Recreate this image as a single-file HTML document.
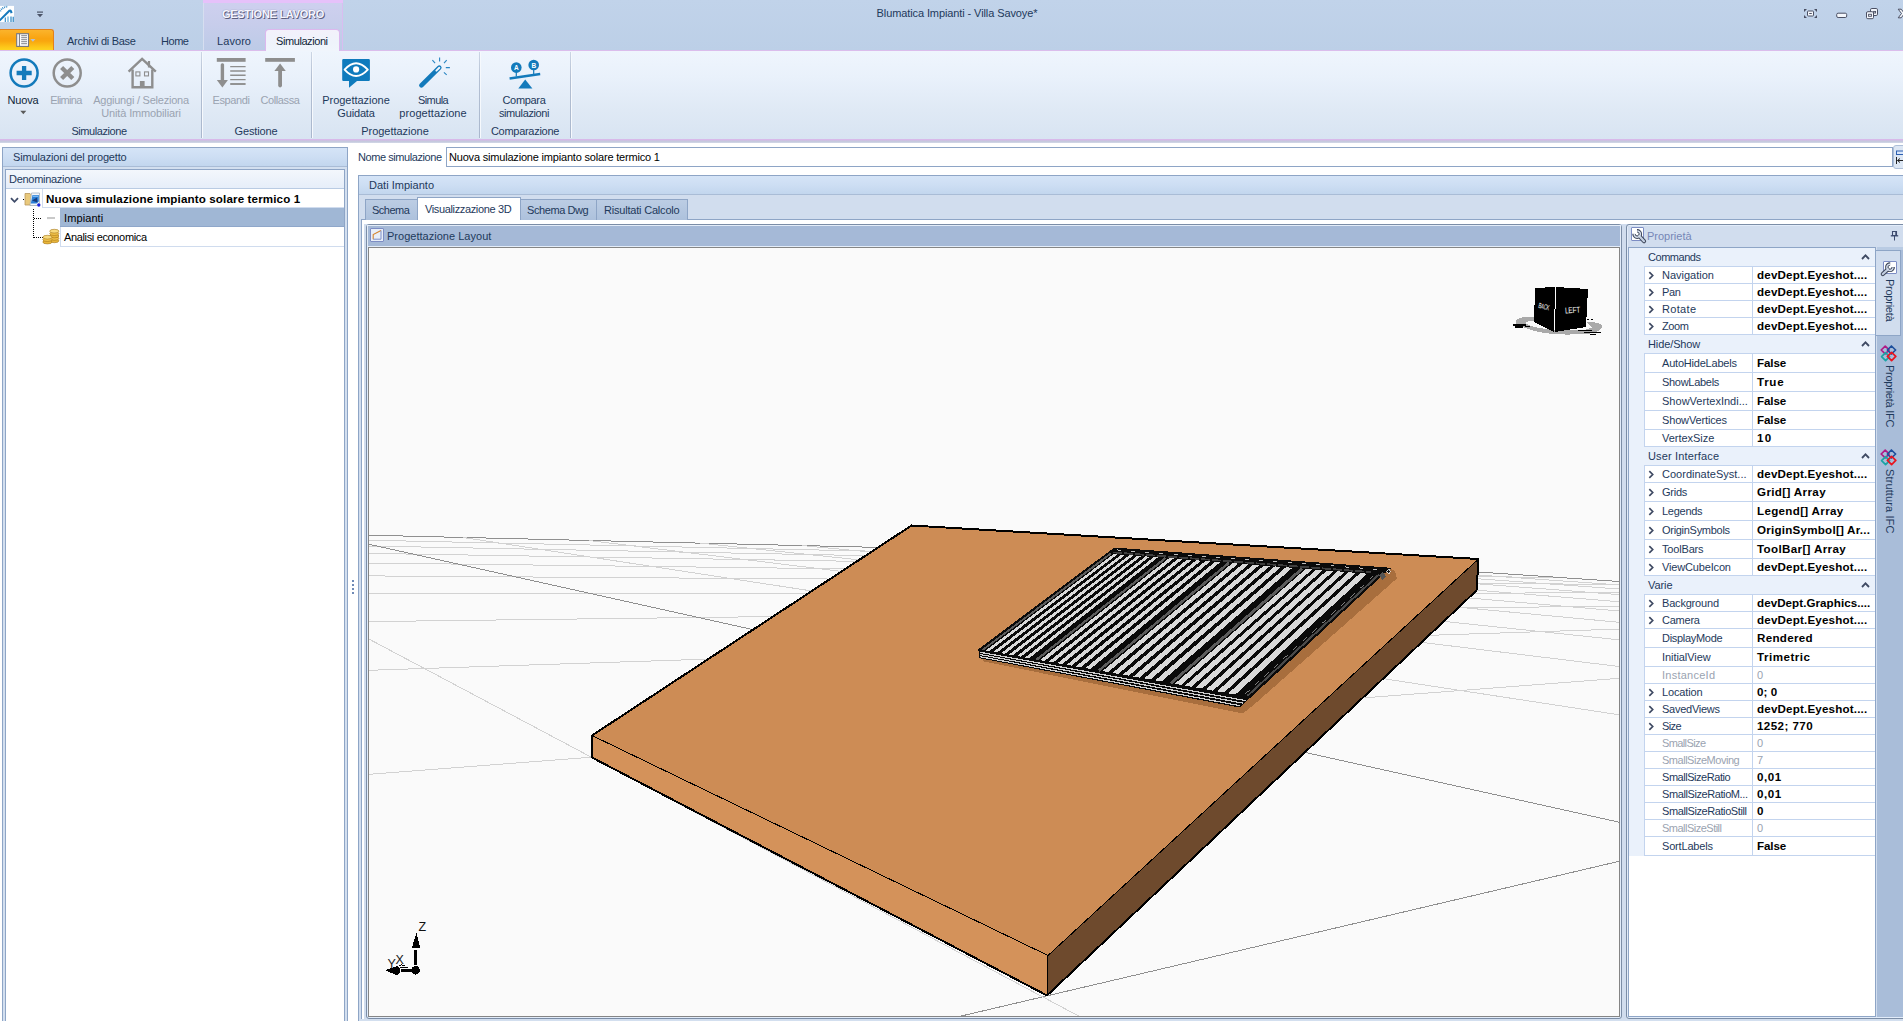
<!DOCTYPE html>
<html>
<head>
<meta charset="utf-8">
<title>Blumatica Impianti - Villa Savoye*</title>
<style>
*{box-sizing:border-box;margin:0;padding:0}
html,body{width:1903px;height:1021px;overflow:hidden;background:#fff}
body{font-family:"Liberation Sans",sans-serif;font-size:11px;color:#1e395b;position:relative;letter-spacing:-0.25px}
.a{position:absolute}
.t{position:absolute;white-space:nowrap;line-height:13px;height:13px}
.c{text-align:center}
.dis{color:#9aa3b1}
.b{font-weight:bold;letter-spacing:0.2px;font-size:11.6px}
/* title + ribbon */
#titlebar{left:0;top:0;width:1903px;height:51px;background:linear-gradient(#c1d3ea,#bccfe7)}
#ribbon{left:0;top:51px;width:1903px;height:88px;background:linear-gradient(#eff5fd 0,#e9f1fb 30%,#dfe9f5 68%,#d8e4f2 100%)}
#ribline{left:0;top:139px;width:1903px;height:4px;background:linear-gradient(#ddb6ed 0,#d3bce6 25%,#c3c6dc 55%,#d3d9e8 100%)}
.gsep{position:absolute;top:52px;width:1px;height:86px;background:linear-gradient(#ccd6e5,#b4c0d3 30%,#a9b7cd)}
.gsep:after{content:"";position:absolute;left:1px;top:0;width:1px;height:86px;background:#f6f9fd}
.tab{border:1px solid #8ea5c6;border-bottom:none;background:linear-gradient(#bccde4,#adc1dc)}
</style>
</head>
<body>
<!-- ===== TITLE BAR ===== -->
<div class="a" id="titlebar"></div>
<div class="a" id="ribbon"></div>
<div class="a" id="ribline"></div>
<!-- app icon -->
<svg class="a" style="left:0;top:5px" width="16" height="18" viewBox="0 0 16 18">
 <rect x="0" y="0.9" width="14" height="16.2" fill="#fff"/>
 <path d="M-0.5 15.6 L9.6 5.6 Q10.6 5.2 11 6.4 L11.6 8.2" stroke="#1679bd" stroke-width="2.1" fill="none" stroke-linejoin="round"/>
 <path d="M0.2 6.2 A8.5 8.5 0 0 1 7.8 1.6" stroke="#2d86c6" stroke-width="1.9" fill="none" stroke-dasharray="0.9 0.9"/>
 <path d="M5.3 17V12.6" stroke="#2d86c6" stroke-width="1.1"/><path d="M8 17V11.5" stroke="#9ccbe8" stroke-width="2"/><path d="M11 17V11.6M13.2 17V11.8" stroke="#1679bd" stroke-width="1.1"/>
</svg>
<!-- quick access arrow -->
<svg class="a" style="left:35.5px;top:10.6px" width="8" height="8" viewBox="0 0 8 8"><rect x="1" y="0.5" width="6" height="1.2" fill="#4b5468"/><path d="M1 3 H7 L4 6.2 Z" fill="#4b5468"/></svg>
<!-- GESTIONE LAVORO category -->
<div class="a" style="left:203px;top:0;width:140px;height:51px;background:linear-gradient(#cfd0ef 0,#c7cdeb 50%,#bccbe7 100%);border-left:1px solid #d6def0;border-right:1px solid #d9bdf0"></div>
<div class="a" style="left:203px;top:0;width:140px;height:3px;background:#e6c1fa"></div>
<div class="t b c" style="letter-spacing:-0.27px;left:203px;top:8px;width:140px;color:#f6f5ff;font-size:11px;text-shadow:1px 1px 0 #5c5f7e,0 0 1px #7a7c9c">GESTIONE LAVORO</div>
<!-- title -->
<div class="t c" style="letter-spacing:-0.10px;left:857px;top:7px;width:200px;color:#1e395b">Blumatica Impianti - Villa Savoye*</div>
<!-- window buttons -->
<svg class="a" style="left:1803px;top:8px" width="15" height="11" viewBox="0 0 15 11">
 <path d="M1 1h3l-3 3z M14 1v3l-3-3z M1 10v-3l3 3z M14 10h-3l3-3z" fill="#4a4f63"/>
 <rect x="4.5" y="3" width="6" height="5" rx="0.8" fill="#f4f7fc" stroke="#4a4f63" stroke-width="1"/>
 <rect x="6.2" y="5" width="2.6" height="1" fill="#4a4f63"/>
</svg>
<svg class="a" style="left:1836px;top:12px" width="12" height="7" viewBox="0 0 12 7"><rect x="0.7" y="1.2" width="10" height="4.3" rx="1.4" fill="#f4f7fc" stroke="#4a4f63" stroke-width="1"/></svg>
<svg class="a" style="left:1865px;top:7px" width="14" height="13" viewBox="0 0 14 13">
 <rect x="5.5" y="1.5" width="7" height="7" rx="1.3" fill="#f4f7fc" stroke="#4a4f63" stroke-width="1"/>
 <rect x="8.6" y="4.4" width="2" height="1.6" fill="none" stroke="#4a4f63" stroke-width=".9"/>
 <rect x="1.5" y="4.7" width="7" height="7" rx="1.3" fill="#f4f7fc" stroke="#4a4f63" stroke-width="1"/>
 <rect x="3.6" y="7.3" width="2.8" height="2" fill="none" stroke="#4a4f63" stroke-width=".9"/>
</svg>
<svg class="a" style="left:1897px;top:8px" width="6" height="12" viewBox="0 0 6 12"><path d="M1.2 1.2 H4.2 L7.5 5.5 L4.2 9.8 H1.2 L4.5 5.5 Z" fill="#f4f7fc" stroke="#4a4f63" stroke-width="1"/></svg>
<!-- pink line under tabs -->
<div class="a" style="left:0;top:50px;width:1903px;height:1px;background:#dbbdec"></div>
<!-- app button -->
<div class="a" style="left:-2px;top:29px;width:56px;height:21px;border-radius:3px 3px 0 0;border:1px solid #e3801c;border-bottom:none;background:linear-gradient(#fbb42c 0,#f9a411 42%,#f9a60e 55%,#fdc91a 88%,#fdd321 100%)"></div>
<svg class="a" style="left:16px;top:33px" width="21" height="14" viewBox="0 0 21 14">
 <rect x="0.7" y="0.7" width="11.8" height="12.7" fill="#fdfdfd" stroke="#73757e" stroke-width="1.1"/>
 <rect x="2.9" y="0.7" width="1" height="12.7" fill="#73757e"/>
 <path d="M5.2 2.7h5.8M5.2 4.7h5.8M5.2 6.7h5.8M5.2 8.7h5.8M5.2 10.7h5.8" stroke="#73757e" stroke-width=".9"/>
 <path d="M14.3 6 h5.2 l-2.6 2.8z" fill="#b7c2d4"/>
</svg>
<!-- tabs -->
<div class="t" style="letter-spacing:-0.27px;left:67px;top:35px">Archivi di Base</div>
<div class="t" style="letter-spacing:-0.45px;left:161px;top:35px">Home</div>
<div class="t" style="letter-spacing:0.07px;left:217px;top:35px">Lavoro</div>
<div class="a" style="left:265px;top:29px;width:75px;height:22px;border:1px solid #dcb8ee;border-bottom:none;border-radius:4px 4px 0 0;background:linear-gradient(#f3f1fb,#eff3fb 60%,#f0f5fc)"></div>
<div class="t" style="letter-spacing:-0.42px;left:276px;top:35px;color:#0f1f38">Simulazioni</div>
<!-- ribbon group separators -->
<div class="gsep" style="left:201px"></div>
<div class="gsep" style="left:311px"></div>
<div class="gsep" style="left:479px"></div>
<div class="gsep" style="left:570px"></div>
<!-- group captions -->
<div class="t c" style="letter-spacing:-0.43px;left:49px;top:125px;width:100px">Simulazione</div>
<div class="t c" style="letter-spacing:-0.15px;left:206px;top:125px;width:100px">Gestione</div>
<div class="t c" style="letter-spacing:-0.02px;left:345px;top:125px;width:100px">Progettazione</div>
<div class="t c" style="letter-spacing:-0.28px;left:475px;top:125px;width:100px">Comparazione</div>
<!-- button labels -->
<div class="t c" style="letter-spacing:-0.20px;left:-27px;top:94px;width:100px;color:#0f1f38">Nuova</div>
<svg class="a" style="left:20px;top:110px" width="7" height="5" viewBox="0 0 7 5"><path d="M0.3 0.8 H6.3 L3.3 4.2Z" fill="#5a5a5a"/></svg>
<div class="t c dis" style="letter-spacing:-0.68px;left:16px;top:94px;width:100px">Elimina</div>
<div class="t c dis" style="letter-spacing:-0.23px;left:91px;top:94px;width:100px">Aggiungi / Seleziona</div>
<div class="t c dis" style="letter-spacing:-0.14px;left:91px;top:107px;width:100px">Unità Immobiliari</div>
<div class="t c dis" style="letter-spacing:-0.38px;left:181px;top:94px;width:100px">Espandi</div>
<div class="t c dis" style="letter-spacing:-0.40px;left:230px;top:94px;width:100px">Collassa</div>
<div class="t c" style="letter-spacing:-0.02px;left:306px;top:94px;width:100px">Progettazione</div>
<div class="t c" style="letter-spacing:-0.16px;left:306px;top:107px;width:100px">Guidata</div>
<div class="t c" style="letter-spacing:-0.59px;left:383px;top:94px;width:100px">Simula</div>
<div class="t c" style="letter-spacing:0.05px;left:383px;top:107px;width:100px">progettazione</div>
<div class="t c" style="letter-spacing:-0.31px;left:474px;top:94px;width:100px">Compara</div>
<div class="t c" style="letter-spacing:-0.38px;left:474px;top:107px;width:100px">simulazioni</div>
<!-- icons -->
<svg class="a" style="left:8px;top:57px" width="32" height="32" viewBox="0 0 32 32">
 <circle cx="16.1" cy="16" r="13.5" fill="none" stroke="#137abb" stroke-width="2.5"/>
 <path d="M16.1 8.9V23.1M8.6 16H23.7" stroke="#137abb" stroke-width="4.3"/>
</svg>
<svg class="a" style="left:51px;top:57px" width="32" height="32" viewBox="0 0 32 32">
 <circle cx="16.2" cy="16" r="13.5" fill="none" stroke="#8e8e8e" stroke-width="2.5"/>
 <path d="M10.6 10.4L21.8 21.6M21.8 10.4L10.6 21.6" stroke="#8e8e8e" stroke-width="4.3"/>
</svg>
<svg class="a" style="left:126px;top:57px" width="32" height="32" viewBox="0 0 32 32">
 <path d="M2.6 14.6 L16.1 1.8 L29.8 14.6" fill="none" stroke="#8e8e8e" stroke-width="2.4" stroke-linejoin="miter"/>
 <path d="M6.6 12.5 V30.2 H26.3 V12.5" fill="none" stroke="#8e8e8e" stroke-width="2.4"/>
 <rect x="21.9" y="4" width="2.2" height="6.5" fill="#8e8e8e"/>
 <rect x="9.9" y="14.9" width="4" height="4" fill="none" stroke="#8e8e8e" stroke-width="1.1"/>
 <rect x="18.5" y="14.9" width="4" height="4" fill="none" stroke="#8e8e8e" stroke-width="1.1"/>
 <rect x="13.9" y="24" width="4.7" height="7" fill="#8e8e8e"/>
</svg>
<svg class="a" style="left:215px;top:57px" width="32" height="32" viewBox="0 0 32 32">
 <rect x="1.8" y="1" width="28.8" height="3.8" fill="#8e8e8e"/>
 <rect x="5.7" y="6.2" width="3.4" height="18" rx="1.5" fill="#8e8e8e"/>
 <path d="M1.8 23 H12.9 L7.4 30.4Z" fill="#8e8e8e"/>
 <path d="M15.2 9.6H30.6M15.2 14H30.6M15.2 18.3H30.6M15.2 22.6H30.6" stroke="#8e8e8e" stroke-width="1.4"/>
 <path d="M15.2 27H30.6" stroke="#8e8e8e" stroke-width="1.9"/>
</svg>
<svg class="a" style="left:264px;top:57px" width="32" height="32" viewBox="0 0 32 32">
 <rect x="1.2" y="1" width="29.7" height="3.8" fill="#8e8e8e"/>
 <path d="M10.4 14 H21.8 L16.1 6.6Z" fill="#8e8e8e"/>
 <rect x="14.2" y="12" width="3.8" height="18.4" rx="1.8" fill="#8e8e8e"/>
</svg>
<svg class="a" style="left:340px;top:57px" width="32" height="32" viewBox="0 0 32 32">
 <path d="M3.4 2.1 H28.7 Q29.9 2.1 29.9 3.3 V22.8 Q29.9 24 28.7 24 H17 L9 30.8 V24 H3.4 Q2.2 24 2.2 22.8 V3.3 Q2.2 2.1 3.4 2.1Z" fill="#0f7bbd"/>
 <path d="M4.6 12.6 Q16 -0.2 27.8 12.6 Q16 25.4 4.6 12.6Z" fill="#0f7bbd" stroke="#fff" stroke-width="1.9" stroke-linejoin="round"/>
 <circle cx="16.1" cy="12.4" r="3.1" fill="#fff"/>
</svg>
<svg class="a" style="left:417px;top:55px" width="36" height="36" viewBox="0 0 36 36">
 <path d="M4.4 30.3 L22.3 12.7" stroke="#137abb" stroke-width="4.6" stroke-linecap="round"/>
 <path d="M19.4 15.6 L22.3 12.7" stroke="#f1f6fd" stroke-width="2" stroke-linecap="round"/>
 <path d="M22.6 2.5V6.4M15.4 5.2L18.1 8.2M27 8.2L29.7 5.2M28.8 12.6H32.9M26.9 17.4L29.7 19.8" stroke="#2a86c2" stroke-width="1.1" fill="none"/>
</svg>
<svg class="a" style="left:508px;top:57px" width="34" height="32" viewBox="0 0 34 32">
 <circle cx="8.3" cy="10.6" r="5.3" fill="#137abb"/>
 <circle cx="25.7" cy="8" r="5.3" fill="#137abb"/>
 <path d="M8.3 15V19.5M25.7 12.5V17" stroke="#137abb" stroke-width="1.2"/>
 <path d="M1.6 21.4 L32.2 16.9" stroke="#137abb" stroke-width="2.5"/>
 <path d="M17.2 22.5 L10.3 31.5 H24.4Z" fill="#137abb"/>
 <text x="8.3" y="13.1" font-family="Liberation Sans" font-weight="bold" font-size="6.5" fill="#fff" text-anchor="middle">A</text>
 <text x="25.7" y="10.5" font-family="Liberation Sans" font-weight="bold" font-size="6.5" fill="#fff" text-anchor="middle">B</text>
</svg>

<!-- ===== LEFT PANEL ===== -->
<div class="a" style="left:2px;top:147px;width:346px;height:880px;border:1px solid #8ea5c6;background:#d3dfef"></div>
<div class="a" style="left:3px;top:148px;width:344px;height:19px;background:linear-gradient(#d5e4f7 0,#cddef3 50%,#c2d6ee 100%);border-bottom:1px solid #a9bcd6"></div>
<div class="t" style="letter-spacing:-0.16px;left:13px;top:151px">Simulazioni del progetto</div>
<div class="a" style="left:5px;top:169px;width:340px;height:860px;border:1px solid #8ea5c6;background:#fff"></div>
<div class="a" style="left:6px;top:170px;width:338px;height:19px;background:linear-gradient(#f3f7fc,#e6eef9);border-bottom:1px solid #b9cbe3"></div>
<div class="t" style="letter-spacing:-0.29px;left:9px;top:173px">Denominazione</div>
<!-- rows -->
<div class="a" style="left:42px;top:189px;width:302px;height:19px;border-left:1px solid #d0dcee;border-bottom:1px solid #d0dcee"></div>
<div class="a" style="left:60px;top:208px;width:284px;height:19px;background:#a0b7d5;border-bottom:1px solid #8fa7ca"></div>
<div class="a" style="left:60px;top:227px;width:284px;height:20px;border-left:1px solid #d0dcee;border-bottom:1px solid #d0dcee"></div>
<div class="t b" style="letter-spacing:0.13px;left:46px;top:192px;color:#000">Nuova simulazione impianto solare termico 1</div>
<div class="t" style="letter-spacing:0.10px;left:64px;top:212px;color:#000">Impianti</div>
<div class="t" style="letter-spacing:-0.35px;left:64px;top:231px;color:#000">Analisi economica</div>
<!-- expander -->
<svg class="a" style="left:10.4px;top:196.6px" width="9" height="7" viewBox="0 0 9 7"><path d="M1 1.2 L4.5 4.8 L8 1.2" fill="none" stroke="#3e4b69" stroke-width="1.8"/></svg>
<!-- tree lines -->
<svg class="a" style="left:20px;top:195px" width="30" height="50" viewBox="0 0 30 50">
 <path d="M3 4.5H5" stroke="#000" stroke-width="1" stroke-dasharray="1 1"/>
 <path d="M13.5 14V43" stroke="#000" stroke-width="1" stroke-dasharray="1 1"/>
 <path d="M14 23.5H21" stroke="#000" stroke-width="1" stroke-dasharray="1 1"/>
 <path d="M14 42.5H23" stroke="#000" stroke-width="1" stroke-dasharray="1 1"/>
 <rect x="27" y="22.5" width="3" height="1.6" fill="#c8c8c8"/>
</svg>
<div class="a" style="left:47px;top:217px;width:8px;height:2px;background:#c9c9c9"></div>
<!-- folder icon -->
<svg class="a" style="left:24px;top:191px" width="18" height="17" viewBox="0 0 18 17">
 <path d="M1 2.5 H6 L7.5 4 H13 V14 H1Z" fill="#e9c97c" stroke="#b9975a" stroke-width=".8"/>
 <path d="M7.5 2 H15.5 V12 L13 14.5 H6Z" fill="#f3f6fa" stroke="#9aa7b8" stroke-width=".7"/>
 <path d="M8.5 4 H14.8 V10.5 L12.5 12.5 H6.8Z" fill="#2a7fd6"/>
 <path d="M8 9.5 L13 6.5 L13.5 11.5Z" fill="#173a7a"/>
 <path d="M9 5.2h5" stroke="#9fd0ff" stroke-width="1"/>
 <circle cx="14.8" cy="14" r="1.7" fill="#1a23e0"/>
</svg>
<!-- coins icon -->
<svg class="a" style="left:42px;top:228px" width="18" height="17" viewBox="0 0 18 17">
 <g stroke="#a5761a" stroke-width=".6">
 <ellipse cx="12.3" cy="12.8" rx="4.6" ry="1.9" fill="#e9b63a"/>
 <ellipse cx="12.3" cy="10.4" rx="4.6" ry="1.9" fill="#f0c24a"/>
 <ellipse cx="12.3" cy="8" rx="4.6" ry="1.9" fill="#e9b63a"/>
 <ellipse cx="12.3" cy="5.6" rx="4.6" ry="1.9" fill="#f0c24a"/>
 <ellipse cx="12.3" cy="3.2" rx="4.6" ry="1.9" fill="#f8db7e"/>
 <ellipse cx="5.4" cy="14" rx="4.6" ry="1.9" fill="#e9b63a"/>
 <ellipse cx="5.4" cy="11.6" rx="4.6" ry="1.9" fill="#f0c24a"/>
 <ellipse cx="5.4" cy="9.2" rx="4.6" ry="1.9" fill="#f8db7e"/>
 </g>
</svg>
<!-- splitter dots -->
<svg class="a" style="left:352px;top:580px" width="2" height="14" viewBox="0 0 2 14" shape-rendering="crispEdges"><path d="M0 0h2v2h-2zM0 4h2v2h-2zM0 8h2v2h-2zM0 12h2v2h-2z" fill="#6f8ab6"/></svg>

<!-- ===== CENTER ===== -->
<div class="t" style="letter-spacing:-0.43px;left:358px;top:151px">Nome simulazione</div>
<div class="a" style="left:446px;top:147px;width:1447px;height:20px;border:1px solid #8ea5c6;background:#fff"></div>
<div class="t" style="letter-spacing:-0.19px;left:449px;top:151px;color:#000">Nuova simulazione impianto solare termico 1</div>
<!-- button right of input -->
<div class="a" style="left:1893px;top:145px;width:14px;height:24px;border:1px solid #aebfd8;border-radius:3px;background:#dde7f4"></div>
<svg class="a" style="left:1895px;top:149px" width="8" height="16" viewBox="0 0 8 16">
 <rect x="1.5" y="2" width="8" height="3.5" fill="#d8e6fa" stroke="#2d5fb0" stroke-width="1"/>
 <path d="M1.5 8V15M2.5 11.5H8M2.5 11.5L5 9.5M2.5 11.5L5 13.5" stroke="#222" stroke-width="1" fill="none"/>
</svg>
<!-- Dati Impianto group -->
<div class="a" style="left:358px;top:175px;width:1560px;height:860px;border:1px solid #8ea5c6;background:#d1ddee"></div>
<div class="a" style="left:359px;top:176px;width:1560px;height:19px;background:linear-gradient(#d5e4f7 0,#cddef3 50%,#c2d6ee 100%);border-bottom:1px solid #a9bcd6"></div>
<div class="t" style="letter-spacing:0.02px;left:369px;top:179px">Dati Impianto</div>
<!-- tab page -->
<div class="a" style="left:361px;top:219px;width:1560px;height:830px;border:1px solid #8ea5c6;background:#fff"></div>
<!-- tabs -->
<div class="a tab" style="left:365px;top:199px;width:53px;height:21px"></div>
<div class="a tab" style="left:520px;top:199px;width:77px;height:21px"></div>
<div class="a tab" style="left:596px;top:199px;width:92px;height:21px"></div>
<div class="a" style="left:417px;top:197px;width:104px;height:23px;border:1px solid #8ea5c6;border-bottom:none;background:#fff"></div>
<div class="t" style="letter-spacing:-0.51px;left:372px;top:204px">Schema</div>
<div class="t" style="letter-spacing:-0.36px;left:425px;top:203px">Visualizzazione 3D</div>
<div class="t" style="letter-spacing:-0.41px;left:527px;top:204px">Schema Dwg</div>
<div class="t" style="letter-spacing:-0.20px;left:604px;top:204px">Risultati Calcolo</div>
<!-- dock area background -->
<div class="a" style="left:364px;top:224px;width:1539px;height:800px;background:#d1ddee"></div>
<!-- Progettazione Layout panel -->
<div class="a" style="left:366px;top:224px;width:1256px;height:795px;border:1px solid #7b8da6;border-radius:3px;background:#d1ddee;box-shadow:inset 0 0 0 1px #e2ecfa"></div>
<div class="a" style="left:367px;top:225px;width:1254px;height:22px;background:#e3ecf8"></div>
<div class="a" style="left:368px;top:226px;width:1252px;height:20px;background:#a5b9d7"></div>
<div class="a" style="left:370px;top:228px;width:14px;height:14px;border:1px solid #7d8dc4;background:#e8eef8;border-radius:1px"></div>
<svg class="a" style="left:371px;top:229px" width="12" height="12" viewBox="0 0 12 12"><path d="M2.2 10.2 V5.5 L10 1.5" fill="none" stroke="#d4832d" stroke-width="1.1"/><path d="M2.2 10.2 H10 V1.5" fill="none" stroke="#7b8dc7" stroke-width="1"/></svg>
<div class="t" style="letter-spacing:0.02px;left:387px;top:230px">Progettazione Layout</div>
<!-- 3D viewport -->
<div class="a" id="vp" style="left:368px;top:247px;width:1252px;height:770px;border:1px solid #858585;background:#fafafa"></div>

<svg class="a" style="left:369px;top:248px" width="1250" height="768" viewBox="369 248 1250 768" shape-rendering="crispEdges">
<rect x="369" y="248" width="1250" height="768" fill="#fafafa"/>
<line x1="369.0" y1="1155.3" x2="2542.6" y2="644.1" stroke="#8f8f8f" stroke-width="1"/>
<line x1="369.0" y1="774.3" x2="2288.3" y2="626.9" stroke="#d2d2d2" stroke-width="1"/>
<line x1="369.0" y1="670.3" x2="2091.0" y2="613.5" stroke="#d2d2d2" stroke-width="1"/>
<line x1="369.0" y1="621.6" x2="1924.5" y2="602.2" stroke="#d2d2d2" stroke-width="1"/>
<line x1="369.0" y1="593.9" x2="1785.3" y2="592.8" stroke="#d2d2d2" stroke-width="1"/>
<line x1="369.0" y1="575.9" x2="1666.2" y2="584.7" stroke="#d2d2d2" stroke-width="1"/>
<line x1="369.0" y1="563.0" x2="1560.9" y2="577.6" stroke="#d2d2d2" stroke-width="1"/>
<line x1="369.0" y1="553.4" x2="1468.2" y2="571.3" stroke="#d2d2d2" stroke-width="1"/>
<line x1="369.0" y1="546.0" x2="1386.0" y2="565.7" stroke="#d2d2d2" stroke-width="1"/>
<line x1="369.0" y1="540.2" x2="1313.9" y2="560.8" stroke="#d2d2d2" stroke-width="1"/>
<line x1="369.0" y1="535.2" x2="1245.2" y2="556.2" stroke="#8f8f8f" stroke-width="1"/>
<line x1="164.2" y1="530.3" x2="1619.0" y2="1303.0" stroke="#d2d2d2" stroke-width="1"/>
<line x1="323.3" y1="534.1" x2="1619.0" y2="822.2" stroke="#8f8f8f" stroke-width="1"/>
<line x1="462.6" y1="537.4" x2="1619.0" y2="714.8" stroke="#d2d2d2" stroke-width="1"/>
<line x1="588.9" y1="540.5" x2="1619.0" y2="666.5" stroke="#d2d2d2" stroke-width="1"/>
<line x1="700.0" y1="543.1" x2="1619.0" y2="639.8" stroke="#d2d2d2" stroke-width="1"/>
<line x1="802.5" y1="545.6" x2="1619.0" y2="622.3" stroke="#d2d2d2" stroke-width="1"/>
<line x1="888.1" y1="547.6" x2="1619.0" y2="611.0" stroke="#d2d2d2" stroke-width="1"/>
<line x1="974.9" y1="549.7" x2="1619.0" y2="601.7" stroke="#d2d2d2" stroke-width="1"/>
<line x1="1054.6" y1="551.6" x2="1619.0" y2="594.6" stroke="#d2d2d2" stroke-width="1"/>
<line x1="1128.0" y1="553.4" x2="1619.0" y2="589.0" stroke="#d2d2d2" stroke-width="1"/>
<line x1="1189.1" y1="554.8" x2="1619.0" y2="584.9" stroke="#d2d2d2" stroke-width="1"/>
<line x1="1245.2" y1="556.2" x2="1619.0" y2="581.5" stroke="#8f8f8f" stroke-width="1"/>
<polygon points="592.0,735.5 1048.0,955.5 1047.0,995.5 592.0,757.5" fill="#d4925a" />
<polygon points="1048.0,955.5 1478.5,559.0 1476.5,590.5 1047.0,995.5" fill="#6e4a2d" />
<polygon points="911.5,525.5 1478.5,559.0 1048.0,955.5 592.0,735.5" fill="#cd8c55" />
<path d="M592.0 735.5 L911.5 525.5 L1478.5 559.0 L1476.5 590.5 L1047.0 995.5 L592.0 757.5 Z" fill="none" stroke="#000" stroke-width="2.0" stroke-linejoin="round" stroke-linecap="round"/>
<path d="M592.0 735.5 L1048.0 955.5" fill="none" stroke="#000" stroke-width="1.0" stroke-linejoin="round" stroke-linecap="round"/>
<path d="M1048.0 955.5 L1478.5 559.0" fill="none" stroke="#000" stroke-width="1.0" stroke-linejoin="round" stroke-linecap="round"/>
<path d="M1048.0 955.5 L1047.0 995.5" fill="none" stroke="#000" stroke-width="1.0" stroke-linejoin="round" stroke-linecap="round"/>
<polygon points="983.6,661.5 1243.0,713.5 1257.0,702.0 1397.0,578.4 1395.0,571.4 1390.0,568.4 1250.0,698.0 978.6,650.0" fill="#a86e3d" />
<polygon points="978.6,650.0 1250.0,698.0 1239.5,707.5 978.6,658.0" fill="#0a0a0a" />
<line x1="979.6" y1="652.2" x2="1246.1" y2="700.7" stroke="#cfcfcf" stroke-width="1.2"/>
<line x1="979.6" y1="654.4" x2="1243.2" y2="703.2" stroke="#cfcfcf" stroke-width="1.2"/>
<line x1="979.6" y1="656.6" x2="1240.4" y2="705.8" stroke="#cfcfcf" stroke-width="1.2"/>
<polygon points="978.6,650.0 1250.0,698.0 1390.0,568.4 1114.3,548.3" fill="#0a0a0a" />
<line x1="982.3" y1="650.2" x2="1110.8" y2="553.6" stroke="#5c5c5c" stroke-width="1.9"/>
<polygon points="985.7,650.5 989.3,651.1 1117.6,554.2 1113.9,553.9" fill="#d9d9d9" />
<polygon points="993.3,651.8 997.0,652.5 1125.4,554.8 1121.6,554.5" fill="#d9d9d9" />
<polygon points="1001.0,653.2 1004.8,653.9 1133.3,555.4 1129.5,555.1" fill="#d9d9d9" />
<polygon points="1008.9,654.6 1012.8,655.3 1141.4,556.0 1137.5,555.7" fill="#d9d9d9" />
<polygon points="1017.0,656.0 1020.9,656.7 1149.6,556.7 1145.6,556.4" fill="#d9d9d9" />
<polygon points="1025.2,657.5 1029.2,658.2 1158.0,557.3 1154.0,557.0" fill="#d9d9d9" />
<line x1="1036.5" y1="659.7" x2="1165.7" y2="557.9" stroke="#5c5c5c" stroke-width="2.2"/>
<polygon points="1040.1,660.1 1044.6,660.9 1173.6,558.5 1169.1,558.2" fill="#d9d9d9" />
<polygon points="1048.8,661.6 1053.3,662.4 1182.6,559.2 1177.9,558.9" fill="#d9d9d9" />
<polygon points="1057.6,663.2 1062.3,664.0 1191.7,560.0 1186.9,559.6" fill="#d9d9d9" />
<polygon points="1066.7,664.8 1071.5,665.6 1201.0,560.7 1196.1,560.3" fill="#d9d9d9" />
<polygon points="1075.9,666.4 1080.8,667.3 1210.5,561.4 1205.5,561.0" fill="#d9d9d9" />
<polygon points="1085.4,668.1 1090.4,669.0 1220.2,562.2 1215.1,561.8" fill="#d9d9d9" />
<line x1="1098.7" y1="670.7" x2="1228.9" y2="562.9" stroke="#5c5c5c" stroke-width="2.5"/>
<polygon points="1102.5,671.1 1108.2,672.1 1238.3,563.6 1232.5,563.1" fill="#d9d9d9" />
<polygon points="1112.6,672.9 1118.4,673.9 1248.6,564.4 1242.7,563.9" fill="#d9d9d9" />
<polygon points="1122.9,674.7 1128.8,675.7 1259.2,565.2 1253.1,564.7" fill="#d9d9d9" />
<polygon points="1133.4,676.5 1139.5,677.6 1270.0,566.1 1263.8,565.6" fill="#d9d9d9" />
<polygon points="1144.2,678.4 1150.4,679.5 1281.1,566.9 1274.7,566.4" fill="#d9d9d9" />
<polygon points="1155.2,680.4 1161.6,681.5 1292.4,567.8 1285.9,567.3" fill="#d9d9d9" />
<line x1="1170.9" y1="683.4" x2="1302.2" y2="568.6" stroke="#5c5c5c" stroke-width="2.8"/>
<polygon points="1174.8,683.8 1181.2,684.9 1312.3,569.4 1305.8,568.9" fill="#d9d9d9" />
<polygon points="1185.1,685.6 1191.5,686.8 1322.8,570.2 1316.2,569.7" fill="#d9d9d9" />
<polygon points="1195.5,687.5 1202.1,688.6 1333.6,571.0 1326.9,570.5" fill="#d9d9d9" />
<polygon points="1206.2,689.4 1213.0,690.6 1344.6,571.9 1337.7,571.3" fill="#d9d9d9" />
<polygon points="1217.2,691.3 1224.1,692.5 1355.8,572.8 1348.8,572.2" fill="#d9d9d9" />
<polygon points="1228.3,693.3 1235.4,694.5 1367.3,573.7 1360.2,573.1" fill="#d9d9d9" />
<line x1="1247.3" y1="696.0" x2="1378.9" y2="574.6" stroke="#4a4a4a" stroke-width="2"/>
<line x1="1245.2" y1="694.1" x2="1372.5" y2="576.9" stroke="#9a9a9a" stroke-width=".8" stroke-dasharray="6 7"/>
<line x1="1113.4" y1="552.4" x2="1371.0" y2="572.1" stroke="#3e3e3e" stroke-width="1.8" stroke-dasharray="9 2"/>
<line x1="1116.6" y1="549.9" x2="1379.9" y2="569.5" stroke="#d0d0d0" stroke-width="0.9" stroke-dasharray="4 10.3"/>
<path d="M978.6 650.0 L1114.3 548.3 L1390.0 568.4" fill="none" stroke="#0a0a0a" stroke-width="1.4" stroke-linejoin="round" stroke-linecap="round"/>
<circle cx="1388.5" cy="571.4" r="1.7" fill="#111" stroke="#e8e8e8" stroke-width=".8"/>
<rect x="1380.0" y="572.9" width="5" height="6" fill="#555" transform="rotate(-42 1382.5 575.9)"/>
<g>
<path d="M1516 321 Q1519 316 1534 317 L1534 321 Q1526 321 1525 323 Q1538 331.5 1585 330 L1592 327.5 L1586 322 Q1604 322 1602 328 Q1598 334 1582 334 Q1540 337 1516 324 Z" fill="#a9a9a9"/>
<path d="M1535 288 L1555 287 L1554 332 L1534 322 Z" fill="#000"/>
<path d="M1556 287 L1588 289 L1586 327 L1555 332 Z" fill="#000"/>
<path d="M1513 325 h13 M1515 327 h8 M1525 326.5 h5" stroke="#000" stroke-width="1.2"/>
<path d="M1578 330.5 h14 M1584 332.5 h17 M1590 334.5 h6 M1587 319.5 h2 M1591 319.5 h2" stroke="#000" stroke-width="1.2"/>
<text x="1565" y="313" font-family="Liberation Sans" font-size="8.5" fill="#fff" transform="rotate(-4 1572 310)" textLength="15" lengthAdjust="spacingAndGlyphs">LEFT</text>
<text x="1538" y="309" font-family="Liberation Sans" font-size="7.5" fill="#fff" transform="rotate(14 1543 308) " textLength="11" lengthAdjust="spacingAndGlyphs">BACK</text>
</g>
<g>
<path d="M415.6 965 V949.5" stroke="#000" stroke-width="3"/>
<path d="M416.4 932.5 L420.4 948 H411.8 Z" fill="#000"/>
<circle cx="415.6" cy="970.3" r="4.3" fill="#000"/>
<path d="M401 970.6 H411.5" stroke="#000" stroke-width="2.4"/><path d="M400 967.4 H408 M399.5 966 l2.5 -1.8 M402 965 h3" stroke="#000" stroke-width="1"/>
<path d="M384.8 970.2 L397 966 L400 968 V973 L397 975.2 Z" fill="#000"/>
<text x="418.6" y="931" font-family="Liberation Sans" font-size="12.5" fill="#111">Z</text>
<text x="395.4" y="964" font-family="Liberation Sans" font-size="12.5" fill="#222">X</text>
<text x="387.4" y="968.2" font-family="Liberation Sans" font-size="12.5" fill="#222">Y</text>
</g>
</svg>
<!-- ===== PROPERTIES ===== -->
<div class="a" style="left:1626px;top:224px;width:290px;height:795px;border:1px solid #7b8da6;border-radius:3px;background:#d1ddee;box-shadow:inset 0 0 0 1px #e2ecfa"></div>
<div class="a" style="left:1628px;top:226px;width:280px;height:21px;background:#d1ddee"></div>
<div class="a" style="left:1631px;top:227px;width:13px;height:14px;border:1px solid #7d8dc4;background:#fff;border-radius:1px"></div>
<svg class="a" style="left:1631px;top:227px;overflow:visible" width="17" height="17" viewBox="0 0 17 17"><g transform="translate(0 0) scale(1)"><g fill="none" stroke-linecap="round"><path d="M8.6 9.4 L13 14.2" stroke="#3d4558" stroke-width="4.2"/><path d="M6.03 3.8 A3.2 3.2 0 1 1 3.0 6.83" stroke="#3d4558" stroke-width="3.4" stroke-linecap="butt"/><path d="M8.2 9 L13 14.2" stroke="#c3cfe2" stroke-width="2.2"/><path d="M6.2 4.0 A3.1 3.1 0 1 1 3.2 6.95" stroke="#d3dcea" stroke-width="1.5" stroke-linecap="butt"/></g></g></svg>
<div class="t" style="letter-spacing:-0.01px;left:1647px;top:230px;color:#7687b6">Proprietà</div>
<svg class="a" style="left:1890px;top:230px" width="9" height="11" viewBox="0 0 9 11"><path d="M2.5 1.5H6.5V5.5H2.5Z" fill="none" stroke="#3c4a6e" stroke-width="1.1"/><path d="M0.8 5.8H8.2" stroke="#3c4a6e" stroke-width="1.3"/><path d="M4.5 6V10.5" stroke="#3c4a6e" stroke-width="1"/><path d="M5.8 1.5V5.5" stroke="#3c4a6e" stroke-width="1"/></svg>
<div class="a" style="left:1628px;top:247px;width:248px;height:770px;border:1px solid #8ea5c6;background:#fff"></div>
<div class="a" style="left:1629px;top:248px;width:246px;height:19px;background:#eaf1fb"></div>
<div class="t" style="letter-spacing:-0.46px;left:1648px;top:251px">Commands</div>
<svg class="a" style="left:1861px;top:254px" width="9" height="6" viewBox="0 0 9 6"><path d="M1 5 L4.5 1.4 L8 5" fill="none" stroke="#3f4a63" stroke-width="1.8"/></svg>
<div class="a" style="left:1629px;top:267px;width:15px;height:17px;background:#eaf1fb"></div>
<div class="a" style="left:1644px;top:266px;width:231px;height:18px;border:1px solid #c3d4ee;border-right:none"></div>
<div class="a" style="left:1752px;top:267px;width:1px;height:17px;background:#c3d4ee"></div>
<svg class="a" style="left:1648px;top:271px" width="7" height="9" viewBox="0 0 7 9"><path d="M1.3 1.2 L4.7 4.5 L1.3 7.8" fill="none" stroke="#3f4a63" stroke-width="1.7"/></svg>
<div class="t" style="letter-spacing:0.00px;left:1662px;top:269px;color:#1e395b">Navigation</div>
<div class="t b" style="letter-spacing:0.18px;left:1757px;top:268px;color:#000">devDept.Eyeshot....</div>
<div class="a" style="left:1629px;top:284px;width:15px;height:17px;background:#eaf1fb"></div>
<div class="a" style="left:1644px;top:283px;width:231px;height:18px;border:1px solid #c3d4ee;border-right:none"></div>
<div class="a" style="left:1752px;top:284px;width:1px;height:17px;background:#c3d4ee"></div>
<svg class="a" style="left:1648px;top:288px" width="7" height="9" viewBox="0 0 7 9"><path d="M1.3 1.2 L4.7 4.5 L1.3 7.8" fill="none" stroke="#3f4a63" stroke-width="1.7"/></svg>
<div class="t" style="letter-spacing:-0.29px;left:1662px;top:286px;color:#1e395b">Pan</div>
<div class="t b" style="letter-spacing:0.18px;left:1757px;top:285px;color:#000">devDept.Eyeshot....</div>
<div class="a" style="left:1629px;top:301px;width:15px;height:17px;background:#eaf1fb"></div>
<div class="a" style="left:1644px;top:300px;width:231px;height:18px;border:1px solid #c3d4ee;border-right:none"></div>
<div class="a" style="left:1752px;top:301px;width:1px;height:17px;background:#c3d4ee"></div>
<svg class="a" style="left:1648px;top:305px" width="7" height="9" viewBox="0 0 7 9"><path d="M1.3 1.2 L4.7 4.5 L1.3 7.8" fill="none" stroke="#3f4a63" stroke-width="1.7"/></svg>
<div class="t" style="letter-spacing:0.32px;left:1662px;top:303px;color:#1e395b">Rotate</div>
<div class="t b" style="letter-spacing:0.18px;left:1757px;top:302px;color:#000">devDept.Eyeshot....</div>
<div class="a" style="left:1629px;top:318px;width:15px;height:17px;background:#eaf1fb"></div>
<div class="a" style="left:1644px;top:317px;width:231px;height:18px;border:1px solid #c3d4ee;border-right:none"></div>
<div class="a" style="left:1752px;top:318px;width:1px;height:17px;background:#c3d4ee"></div>
<svg class="a" style="left:1648px;top:322px" width="7" height="9" viewBox="0 0 7 9"><path d="M1.3 1.2 L4.7 4.5 L1.3 7.8" fill="none" stroke="#3f4a63" stroke-width="1.7"/></svg>
<div class="t" style="letter-spacing:-0.38px;left:1662px;top:320px;color:#1e395b">Zoom</div>
<div class="t b" style="letter-spacing:0.18px;left:1757px;top:319px;color:#000">devDept.Eyeshot....</div>
<div class="a" style="left:1629px;top:335px;width:246px;height:19px;background:#eaf1fb"></div>
<div class="t" style="letter-spacing:-0.11px;left:1648px;top:338px">Hide/Show</div>
<svg class="a" style="left:1861px;top:341px" width="9" height="6" viewBox="0 0 9 6"><path d="M1 5 L4.5 1.4 L8 5" fill="none" stroke="#3f4a63" stroke-width="1.8"/></svg>
<div class="a" style="left:1629px;top:354px;width:15px;height:19px;background:#eaf1fb"></div>
<div class="a" style="left:1644px;top:353px;width:231px;height:20px;border:1px solid #c3d4ee;border-right:none"></div>
<div class="a" style="left:1752px;top:354px;width:1px;height:19px;background:#c3d4ee"></div>
<div class="t" style="letter-spacing:-0.21px;left:1662px;top:357px;color:#1e395b">AutoHideLabels</div>
<div class="t b" style="letter-spacing:-0.09px;left:1757px;top:356px;color:#000">False</div>
<div class="a" style="left:1629px;top:373px;width:15px;height:19px;background:#eaf1fb"></div>
<div class="a" style="left:1644px;top:372px;width:231px;height:20px;border:1px solid #c3d4ee;border-right:none"></div>
<div class="a" style="left:1752px;top:373px;width:1px;height:19px;background:#c3d4ee"></div>
<div class="t" style="letter-spacing:-0.29px;left:1662px;top:376px;color:#1e395b">ShowLabels</div>
<div class="t b" style="letter-spacing:0.71px;left:1757px;top:375px;color:#000">True</div>
<div class="a" style="left:1629px;top:392px;width:15px;height:19px;background:#eaf1fb"></div>
<div class="a" style="left:1644px;top:391px;width:231px;height:20px;border:1px solid #c3d4ee;border-right:none"></div>
<div class="a" style="left:1752px;top:392px;width:1px;height:19px;background:#c3d4ee"></div>
<div class="t" style="letter-spacing:0.02px;left:1662px;top:395px;color:#1e395b">ShowVertexIndi...</div>
<div class="t b" style="letter-spacing:-0.09px;left:1757px;top:394px;color:#000">False</div>
<div class="a" style="left:1629px;top:411px;width:15px;height:19px;background:#eaf1fb"></div>
<div class="a" style="left:1644px;top:410px;width:231px;height:20px;border:1px solid #c3d4ee;border-right:none"></div>
<div class="a" style="left:1752px;top:411px;width:1px;height:19px;background:#c3d4ee"></div>
<div class="t" style="letter-spacing:-0.15px;left:1662px;top:414px;color:#1e395b">ShowVertices</div>
<div class="t b" style="letter-spacing:-0.09px;left:1757px;top:413px;color:#000">False</div>
<div class="a" style="left:1629px;top:430px;width:15px;height:17px;background:#eaf1fb"></div>
<div class="a" style="left:1644px;top:429px;width:231px;height:18px;border:1px solid #c3d4ee;border-right:none"></div>
<div class="a" style="left:1752px;top:430px;width:1px;height:17px;background:#c3d4ee"></div>
<div class="t" style="letter-spacing:-0.03px;left:1662px;top:432px;color:#1e395b">VertexSize</div>
<div class="t b" style="letter-spacing:1.20px;left:1757px;top:431px;color:#000">10</div>
<div class="a" style="left:1629px;top:447px;width:246px;height:19px;background:#eaf1fb"></div>
<div class="t" style="letter-spacing:0.15px;left:1648px;top:450px">User Interface</div>
<svg class="a" style="left:1861px;top:453px" width="9" height="6" viewBox="0 0 9 6"><path d="M1 5 L4.5 1.4 L8 5" fill="none" stroke="#3f4a63" stroke-width="1.8"/></svg>
<div class="a" style="left:1629px;top:466px;width:15px;height:17px;background:#eaf1fb"></div>
<div class="a" style="left:1644px;top:465px;width:231px;height:18px;border:1px solid #c3d4ee;border-right:none"></div>
<div class="a" style="left:1752px;top:466px;width:1px;height:17px;background:#c3d4ee"></div>
<svg class="a" style="left:1648px;top:470px" width="7" height="9" viewBox="0 0 7 9"><path d="M1.3 1.2 L4.7 4.5 L1.3 7.8" fill="none" stroke="#3f4a63" stroke-width="1.7"/></svg>
<div class="t" style="letter-spacing:0.01px;left:1662px;top:468px;color:#1e395b">CoordinateSyst...</div>
<div class="t b" style="letter-spacing:0.18px;left:1757px;top:467px;color:#000">devDept.Eyeshot....</div>
<div class="a" style="left:1629px;top:483px;width:15px;height:19px;background:#eaf1fb"></div>
<div class="a" style="left:1644px;top:482px;width:231px;height:20px;border:1px solid #c3d4ee;border-right:none"></div>
<div class="a" style="left:1752px;top:483px;width:1px;height:19px;background:#c3d4ee"></div>
<svg class="a" style="left:1648px;top:488px" width="7" height="9" viewBox="0 0 7 9"><path d="M1.3 1.2 L4.7 4.5 L1.3 7.8" fill="none" stroke="#3f4a63" stroke-width="1.7"/></svg>
<div class="t" style="letter-spacing:-0.25px;left:1662px;top:486px;color:#1e395b">Grids</div>
<div class="t b" style="letter-spacing:0.36px;left:1757px;top:485px;color:#000">Grid[] Array</div>
<div class="a" style="left:1629px;top:502px;width:15px;height:19px;background:#eaf1fb"></div>
<div class="a" style="left:1644px;top:501px;width:231px;height:20px;border:1px solid #c3d4ee;border-right:none"></div>
<div class="a" style="left:1752px;top:502px;width:1px;height:19px;background:#c3d4ee"></div>
<svg class="a" style="left:1648px;top:507px" width="7" height="9" viewBox="0 0 7 9"><path d="M1.3 1.2 L4.7 4.5 L1.3 7.8" fill="none" stroke="#3f4a63" stroke-width="1.7"/></svg>
<div class="t" style="letter-spacing:-0.27px;left:1662px;top:505px;color:#1e395b">Legends</div>
<div class="t b" style="letter-spacing:0.32px;left:1757px;top:504px;color:#000">Legend[] Array</div>
<div class="a" style="left:1629px;top:521px;width:15px;height:19px;background:#eaf1fb"></div>
<div class="a" style="left:1644px;top:520px;width:231px;height:20px;border:1px solid #c3d4ee;border-right:none"></div>
<div class="a" style="left:1752px;top:521px;width:1px;height:19px;background:#c3d4ee"></div>
<svg class="a" style="left:1648px;top:526px" width="7" height="9" viewBox="0 0 7 9"><path d="M1.3 1.2 L4.7 4.5 L1.3 7.8" fill="none" stroke="#3f4a63" stroke-width="1.7"/></svg>
<div class="t" style="letter-spacing:-0.29px;left:1662px;top:524px;color:#1e395b">OriginSymbols</div>
<div class="t b" style="letter-spacing:0.24px;left:1757px;top:523px;color:#000">OriginSymbol[] Ar...</div>
<div class="a" style="left:1629px;top:540px;width:15px;height:19px;background:#eaf1fb"></div>
<div class="a" style="left:1644px;top:539px;width:231px;height:20px;border:1px solid #c3d4ee;border-right:none"></div>
<div class="a" style="left:1752px;top:540px;width:1px;height:19px;background:#c3d4ee"></div>
<svg class="a" style="left:1648px;top:545px" width="7" height="9" viewBox="0 0 7 9"><path d="M1.3 1.2 L4.7 4.5 L1.3 7.8" fill="none" stroke="#3f4a63" stroke-width="1.7"/></svg>
<div class="t" style="letter-spacing:-0.17px;left:1662px;top:543px;color:#1e395b">ToolBars</div>
<div class="t b" style="letter-spacing:0.35px;left:1757px;top:542px;color:#000">ToolBar[] Array</div>
<div class="a" style="left:1629px;top:559px;width:15px;height:17px;background:#eaf1fb"></div>
<div class="a" style="left:1644px;top:558px;width:231px;height:18px;border:1px solid #c3d4ee;border-right:none"></div>
<div class="a" style="left:1752px;top:559px;width:1px;height:17px;background:#c3d4ee"></div>
<svg class="a" style="left:1648px;top:563px" width="7" height="9" viewBox="0 0 7 9"><path d="M1.3 1.2 L4.7 4.5 L1.3 7.8" fill="none" stroke="#3f4a63" stroke-width="1.7"/></svg>
<div class="t" style="letter-spacing:-0.16px;left:1662px;top:561px;color:#1e395b">ViewCubeIcon</div>
<div class="t b" style="letter-spacing:0.18px;left:1757px;top:560px;color:#000">devDept.Eyeshot....</div>
<div class="a" style="left:1629px;top:576px;width:246px;height:19px;background:#eaf1fb"></div>
<div class="t" style="letter-spacing:-0.07px;left:1648px;top:579px">Varie</div>
<svg class="a" style="left:1861px;top:582px" width="9" height="6" viewBox="0 0 9 6"><path d="M1 5 L4.5 1.4 L8 5" fill="none" stroke="#3f4a63" stroke-width="1.8"/></svg>
<div class="a" style="left:1629px;top:595px;width:15px;height:17px;background:#eaf1fb"></div>
<div class="a" style="left:1644px;top:594px;width:231px;height:18px;border:1px solid #c3d4ee;border-right:none"></div>
<div class="a" style="left:1752px;top:595px;width:1px;height:17px;background:#c3d4ee"></div>
<svg class="a" style="left:1648px;top:599px" width="7" height="9" viewBox="0 0 7 9"><path d="M1.3 1.2 L4.7 4.5 L1.3 7.8" fill="none" stroke="#3f4a63" stroke-width="1.7"/></svg>
<div class="t" style="letter-spacing:-0.19px;left:1662px;top:597px;color:#1e395b">Background</div>
<div class="t b" style="letter-spacing:0.06px;left:1757px;top:596px;color:#000">devDept.Graphics....</div>
<div class="a" style="left:1629px;top:612px;width:15px;height:17px;background:#eaf1fb"></div>
<div class="a" style="left:1644px;top:611px;width:231px;height:18px;border:1px solid #c3d4ee;border-right:none"></div>
<div class="a" style="left:1752px;top:612px;width:1px;height:17px;background:#c3d4ee"></div>
<svg class="a" style="left:1648px;top:616px" width="7" height="9" viewBox="0 0 7 9"><path d="M1.3 1.2 L4.7 4.5 L1.3 7.8" fill="none" stroke="#3f4a63" stroke-width="1.7"/></svg>
<div class="t" style="letter-spacing:-0.23px;left:1662px;top:614px;color:#1e395b">Camera</div>
<div class="t b" style="letter-spacing:0.18px;left:1757px;top:613px;color:#000">devDept.Eyeshot....</div>
<div class="a" style="left:1629px;top:629px;width:15px;height:19px;background:#eaf1fb"></div>
<div class="a" style="left:1644px;top:628px;width:231px;height:20px;border:1px solid #c3d4ee;border-right:none"></div>
<div class="a" style="left:1752px;top:629px;width:1px;height:19px;background:#c3d4ee"></div>
<div class="t" style="letter-spacing:-0.30px;left:1662px;top:632px;color:#1e395b">DisplayMode</div>
<div class="t b" style="letter-spacing:0.30px;left:1757px;top:631px;color:#000">Rendered</div>
<div class="a" style="left:1629px;top:648px;width:15px;height:19px;background:#eaf1fb"></div>
<div class="a" style="left:1644px;top:647px;width:231px;height:20px;border:1px solid #c3d4ee;border-right:none"></div>
<div class="a" style="left:1752px;top:648px;width:1px;height:19px;background:#c3d4ee"></div>
<div class="t" style="letter-spacing:-0.07px;left:1662px;top:651px;color:#1e395b">InitialView</div>
<div class="t b" style="letter-spacing:0.50px;left:1757px;top:650px;color:#000">Trimetric</div>
<div class="a" style="left:1629px;top:667px;width:15px;height:17px;background:#eaf1fb"></div>
<div class="a" style="left:1644px;top:666px;width:231px;height:18px;border:1px solid #c3d4ee;border-right:none"></div>
<div class="a" style="left:1752px;top:667px;width:1px;height:17px;background:#c3d4ee"></div>
<div class="t" style="letter-spacing:0.25px;left:1662px;top:669px;color:#9aa3b1">InstanceId</div>
<div class="t" style="letter-spacing:0.88px;left:1757px;top:669px;color:#9aa3b1">0</div>
<div class="a" style="left:1629px;top:684px;width:15px;height:17px;background:#eaf1fb"></div>
<div class="a" style="left:1644px;top:683px;width:231px;height:18px;border:1px solid #c3d4ee;border-right:none"></div>
<div class="a" style="left:1752px;top:684px;width:1px;height:17px;background:#c3d4ee"></div>
<svg class="a" style="left:1648px;top:688px" width="7" height="9" viewBox="0 0 7 9"><path d="M1.3 1.2 L4.7 4.5 L1.3 7.8" fill="none" stroke="#3f4a63" stroke-width="1.7"/></svg>
<div class="t" style="letter-spacing:-0.14px;left:1662px;top:686px;color:#1e395b">Location</div>
<div class="t b" style="letter-spacing:0.11px;left:1757px;top:685px;color:#000">0; 0</div>
<div class="a" style="left:1629px;top:701px;width:15px;height:17px;background:#eaf1fb"></div>
<div class="a" style="left:1644px;top:700px;width:231px;height:18px;border:1px solid #c3d4ee;border-right:none"></div>
<div class="a" style="left:1752px;top:701px;width:1px;height:17px;background:#c3d4ee"></div>
<svg class="a" style="left:1648px;top:705px" width="7" height="9" viewBox="0 0 7 9"><path d="M1.3 1.2 L4.7 4.5 L1.3 7.8" fill="none" stroke="#3f4a63" stroke-width="1.7"/></svg>
<div class="t" style="letter-spacing:-0.26px;left:1662px;top:703px;color:#1e395b">SavedViews</div>
<div class="t b" style="letter-spacing:0.18px;left:1757px;top:702px;color:#000">devDept.Eyeshot....</div>
<div class="a" style="left:1629px;top:718px;width:15px;height:17px;background:#eaf1fb"></div>
<div class="a" style="left:1644px;top:717px;width:231px;height:18px;border:1px solid #c3d4ee;border-right:none"></div>
<div class="a" style="left:1752px;top:718px;width:1px;height:17px;background:#c3d4ee"></div>
<svg class="a" style="left:1648px;top:722px" width="7" height="9" viewBox="0 0 7 9"><path d="M1.3 1.2 L4.7 4.5 L1.3 7.8" fill="none" stroke="#3f4a63" stroke-width="1.7"/></svg>
<div class="t" style="letter-spacing:-0.60px;left:1662px;top:720px;color:#1e395b">Size</div>
<div class="t b" style="letter-spacing:0.42px;left:1757px;top:719px;color:#000">1252; 770</div>
<div class="a" style="left:1629px;top:735px;width:15px;height:17px;background:#eaf1fb"></div>
<div class="a" style="left:1644px;top:734px;width:231px;height:18px;border:1px solid #c3d4ee;border-right:none"></div>
<div class="a" style="left:1752px;top:735px;width:1px;height:17px;background:#c3d4ee"></div>
<div class="t" style="letter-spacing:-0.61px;left:1662px;top:737px;color:#9aa3b1">SmallSize</div>
<div class="t" style="letter-spacing:0.88px;left:1757px;top:737px;color:#9aa3b1">0</div>
<div class="a" style="left:1629px;top:752px;width:15px;height:17px;background:#eaf1fb"></div>
<div class="a" style="left:1644px;top:751px;width:231px;height:18px;border:1px solid #c3d4ee;border-right:none"></div>
<div class="a" style="left:1752px;top:752px;width:1px;height:17px;background:#c3d4ee"></div>
<div class="t" style="letter-spacing:-0.48px;left:1662px;top:754px;color:#9aa3b1">SmallSizeMoving</div>
<div class="t" style="letter-spacing:0.88px;left:1757px;top:754px;color:#9aa3b1">7</div>
<div class="a" style="left:1629px;top:769px;width:15px;height:17px;background:#eaf1fb"></div>
<div class="a" style="left:1644px;top:768px;width:231px;height:18px;border:1px solid #c3d4ee;border-right:none"></div>
<div class="a" style="left:1752px;top:769px;width:1px;height:17px;background:#c3d4ee"></div>
<div class="t" style="letter-spacing:-0.46px;left:1662px;top:771px;color:#1e395b">SmallSizeRatio</div>
<div class="t b" style="letter-spacing:0.57px;left:1757px;top:770px;color:#000">0,01</div>
<div class="a" style="left:1629px;top:786px;width:15px;height:17px;background:#eaf1fb"></div>
<div class="a" style="left:1644px;top:785px;width:231px;height:18px;border:1px solid #c3d4ee;border-right:none"></div>
<div class="a" style="left:1752px;top:786px;width:1px;height:17px;background:#c3d4ee"></div>
<div class="t" style="letter-spacing:-0.41px;left:1662px;top:788px;color:#1e395b">SmallSizeRatioM...</div>
<div class="t b" style="letter-spacing:0.57px;left:1757px;top:787px;color:#000">0,01</div>
<div class="a" style="left:1629px;top:803px;width:15px;height:17px;background:#eaf1fb"></div>
<div class="a" style="left:1644px;top:802px;width:231px;height:18px;border:1px solid #c3d4ee;border-right:none"></div>
<div class="a" style="left:1752px;top:803px;width:1px;height:17px;background:#c3d4ee"></div>
<div class="t" style="letter-spacing:-0.41px;left:1662px;top:805px;color:#1e395b">SmallSizeRatioStill</div>
<div class="t b" style="letter-spacing:0.55px;left:1757px;top:804px;color:#000">0</div>
<div class="a" style="left:1629px;top:820px;width:15px;height:17px;background:#eaf1fb"></div>
<div class="a" style="left:1644px;top:819px;width:231px;height:18px;border:1px solid #c3d4ee;border-right:none"></div>
<div class="a" style="left:1752px;top:820px;width:1px;height:17px;background:#c3d4ee"></div>
<div class="t" style="letter-spacing:-0.51px;left:1662px;top:822px;color:#9aa3b1">SmallSizeStill</div>
<div class="t" style="letter-spacing:0.88px;left:1757px;top:822px;color:#9aa3b1">0</div>
<div class="a" style="left:1629px;top:837px;width:15px;height:19px;background:#eaf1fb"></div>
<div class="a" style="left:1644px;top:836px;width:231px;height:20px;border:1px solid #c3d4ee;border-right:none"></div>
<div class="a" style="left:1752px;top:837px;width:1px;height:19px;background:#c3d4ee"></div>
<div class="t" style="letter-spacing:-0.18px;left:1662px;top:840px;color:#1e395b">SortLabels</div>
<div class="t b" style="letter-spacing:-0.09px;left:1757px;top:839px;color:#000">False</div>
<div class="a" style="left:1877px;top:247px;width:26px;height:770px;background:#a9bdd9"></div>
<div class="a" style="left:1877px;top:247px;width:26px;height:3px;background:#b9cbe3"></div>
<div class="a" style="left:1876px;top:250px;width:25px;height:86px;background:#d1ddee;border:1px solid #8ea5c6;border-left:none"></div>
<div class="a" style="left:1883px;top:261px;width:14px;height:13px;border:1px solid #7d8dc4;background:#fff;border-radius:1px"></div>
<svg class="a" style="left:1880px;top:261px;overflow:visible" width="17" height="17" viewBox="0 0 17 17"><g transform="translate(17 0) rotate(90) scale(1)"><g fill="none" stroke-linecap="round"><path d="M8.6 9.4 L13 14.2" stroke="#3d4558" stroke-width="4.2"/><path d="M6.03 3.8 A3.2 3.2 0 1 1 3.0 6.83" stroke="#3d4558" stroke-width="3.4" stroke-linecap="butt"/><path d="M8.2 9 L13 14.2" stroke="#c3cfe2" stroke-width="2.2"/><path d="M6.2 4.0 A3.1 3.1 0 1 1 3.2 6.95" stroke="#d3dcea" stroke-width="1.5" stroke-linecap="butt"/></g></g></svg>
<div class="t" style="left:1896px;top:279px;color:#1e395b;transform-origin:0 0;transform:rotate(90deg)">Proprietà</div>
<div class="t" style="left:1896px;top:365px;color:#1e395b;transform-origin:0 0;transform:rotate(90deg)">Proprietà IFC</div>
<div class="t" style="letter-spacing:0.12px;left:1896px;top:469px;color:#1e395b;transform-origin:0 0;transform:rotate(90deg)">Struttura IFC</div>
<svg class="a" style="left:1880px;top:345px" width="17" height="17" viewBox="0 0 17 17" fill="none" stroke-width="1.7" stroke-linejoin="round"><path d="M5.2 1.2 L9.2 5 L5.2 8.8 L1.2 5Z" stroke="#b01a86"/><path d="M11.4 1 L15.6 5 L11.4 9 L7.4 5Z" stroke="#1c4f9c"/><path d="M5.6 7.6 L9.6 11.6 L5.6 15.6 L1.6 11.6Z" stroke="#1aa4a4"/><path d="M11.6 7.4 L15.8 11.4 L11.6 15.6 L7.4 11.4Z" stroke="#e8151f"/></svg>
<svg class="a" style="left:1880px;top:449px" width="17" height="17" viewBox="0 0 17 17" fill="none" stroke-width="1.7" stroke-linejoin="round"><path d="M5.2 1.2 L9.2 5 L5.2 8.8 L1.2 5Z" stroke="#b01a86"/><path d="M11.4 1 L15.6 5 L11.4 9 L7.4 5Z" stroke="#1c4f9c"/><path d="M5.6 7.6 L9.6 11.6 L5.6 15.6 L1.6 11.6Z" stroke="#1aa4a4"/><path d="M11.6 7.4 L15.8 11.4 L11.6 15.6 L7.4 11.4Z" stroke="#e8151f"/></svg>
<div class="a" style="left:359px;top:1019px;width:1545px;height:2px;background:#d3dfef"></div>
</body>
</html>
